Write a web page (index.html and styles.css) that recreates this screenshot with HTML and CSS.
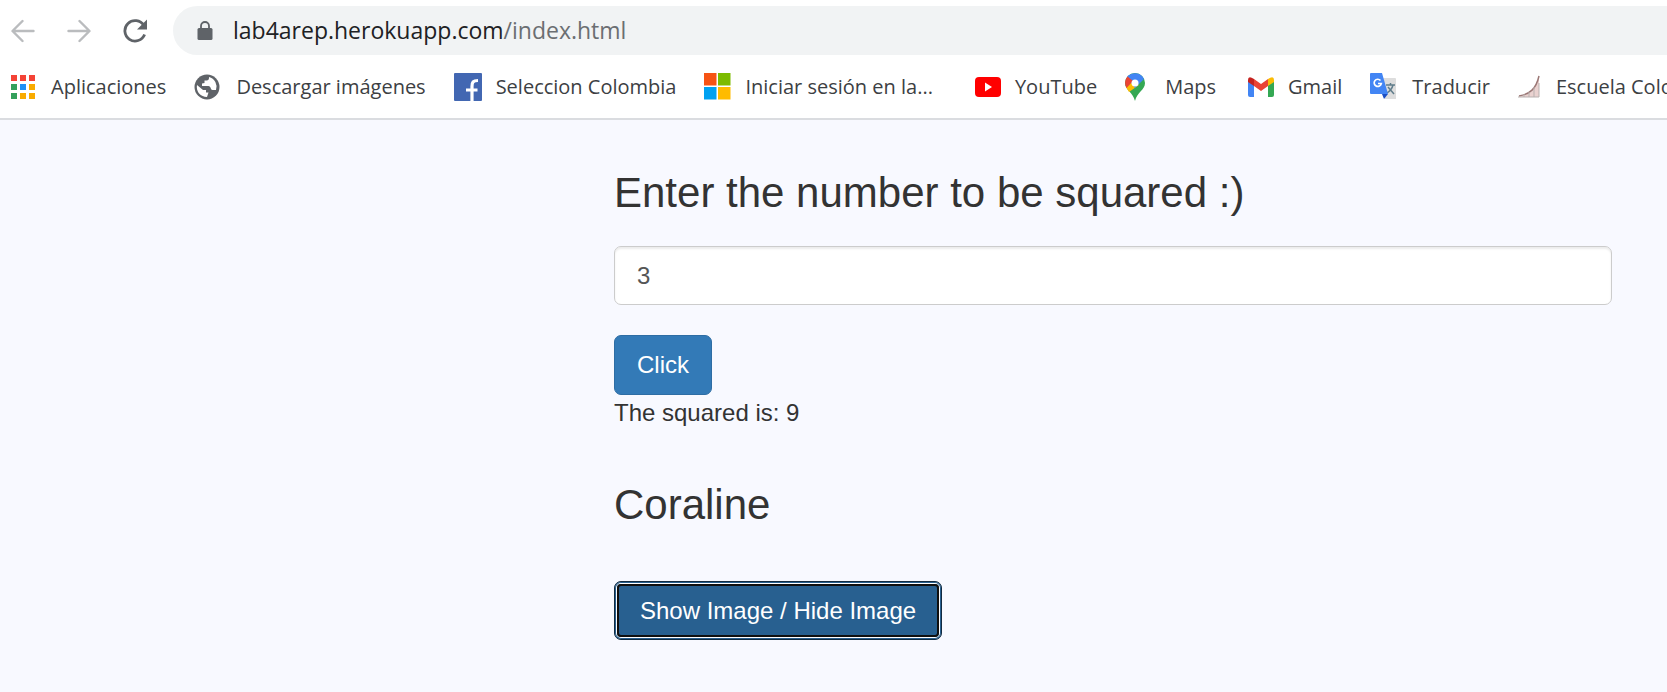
FILE: index.html
```html
<!DOCTYPE html>
<html lang="es">
<head>
<meta charset="utf-8">
<title>Square a number</title>
<link rel="stylesheet" href="styles.css">
</head>
<body>
<header class="browser">
  <div class="toolbar">
    <div class="navs">
      <button class="nav" type="button" aria-label="Back"><svg width="24" height="24" viewBox="0 0 24 24" fill="none" stroke="#babcbe" stroke-width="2.4" stroke-linecap="round" stroke-linejoin="round"><path d="M22.5 12H2M11.5 2L1.5 12l10 10"/></svg></button>
      <button class="nav" type="button" aria-label="Forward"><svg width="24" height="24" viewBox="0 0 24 24" fill="none" stroke="#babcbe" stroke-width="2.4" stroke-linecap="round" stroke-linejoin="round"><path d="M1.5 12H22M12.5 2l10 10-10 10"/></svg></button>
      <button class="nav" type="button" aria-label="Reload"><svg width="24" height="24" viewBox="0 0 24 24" fill="none"><path d="M20.8 6.5A10.2 10.2 0 1 0 21.6 15.5" stroke="#5f6368" stroke-width="2.8"/><path d="M24 .5V10.5H14z" fill="#5f6368"/></svg></button>
    </div>
    <div class="address">
      <svg width="16" height="20" viewBox="0 0 16 20"><path d="M4 8V5a4 4 0 0 1 8 0v3" fill="none" stroke="#5f6368" stroke-width="1.8"/><rect x="0.5" y="7" width="15" height="12" rx="1.5" fill="#5f6368"/></svg>
      <span class="url">lab4arep.herokuapp.com<span class="path">/index.html</span></span>
    </div>
  </div>
  <nav class="bookmarks">
    <a class="bookmark" href="#"><svg width="24" height="24" viewBox="0 0 24 24"><path fill="#f44336" d="M0 0h6v6H0zM9 0h6v6H9zM18 0h6v6h-6z"/><path fill="#34a05c" d="M0 9h6v6H0zM0 18h6v6H0z"/><path fill="#1e90f5" d="M9 9h6v6H9z"/><path fill="#f9ab00" d="M18 9h6v6h-6zM9 18h6v6H9zM18 18h6v6h-6z"/></svg>Aplicaciones</a>
    <a class="bookmark" href="#"><svg width="26" height="26" viewBox="0 0 26 26"><circle cx="13" cy="13" r="12.5" fill="#5f6368"/><path fill="#fff" d="M15 3c0 2 0 3-2 3.500h-2.500V9L8 9.500V12h6.500c2.500 0 2 4 4 4H22a10 10 0 0 0-7-13zM3 11l6 5h3v2.500h2.500L13 23A10 10 0 0 1 3 11z"/></svg>Descargar imágenes</a>
    <a class="bookmark snug" href="#"><svg width="28" height="28" viewBox="0 0 28 28"><rect width="28" height="28" rx="1" fill="#4267b2"/><path d="M18 28V13.5c0-4.500 1-6 6-6M12 17h11.500" fill="none" stroke="#fff" stroke-width="3.2"/></svg>Seleccion Colombia</a>
    <a class="bookmark snug" href="#"><svg width="27" height="27" viewBox="0 0 27 27"><path fill="#f65314" d="M0 0h12.5v12.5H0z"/><path fill="#7cbb00" d="M14 0h12.5v12.5H14z"/><path fill="#00a1f1" d="M0 14h12.5v12.5H0z"/><path fill="#ffbb00" d="M14 14h12.5v12.5H14z"/></svg>Iniciar sesión en la...</a>
    <a class="bookmark snug youtube" href="#"><svg width="26" height="20" viewBox="0 0 26 20"><rect width="26" height="20" rx="4" fill="#f00"/><path fill="#fff" d="M10 5.5l7 4.500-7 4.500z"/></svg>YouTube</a>
    <a class="bookmark wide" href="#"><svg width="20" height="28" viewBox="0 0 20 28"><path fill="#34a853" d="M10 0a10 10 0 0 1 10 10c0 7-8 9-10 18C8 19 0 17 0 10A10 10 0 0 1 10 0z"/><path fill="#fbbc04" d="M6 6L1 14l3 5L14 12z"/><path fill="#4285f4" d="M2 4a10 10 0 0 1 17 2l-9 9z"/><path fill="#ea4335" d="M2.500 3.500L8 8l-6.500 7C-.5 11-.5 7 2.500 3.500z"/><circle cx="10" cy="10" r="3.500" fill="#fff"/></svg>Maps</a>
    <a class="bookmark snug gmail" href="#"><svg width="26" height="20" viewBox="0 0 26 20"><path fill="#4285f4" d="M0 4l6 4v12H2q-2 0-2-2z"/><path fill="#34a853" d="M20 8l6-4v14q0 2-2 2h-4z"/><path fill="#ea4335" d="M6 2l7 5 7-5v7l-7 5-7-5z"/><path fill="#c5221f" d="M0 3q0-5 6-1v7L0 5z"/><path fill="#fbbc04" d="M26 3q0-5-6-1v7l6-4z"/></svg>Gmail</a>
    <a class="bookmark" href="#"><svg width="26" height="27" viewBox="0 0 26 27"><path fill="#ddd" d="M10 5h15q1 0 1 1v20H15z"/><path d="M16 12h9M20.500 10v2M23 12c-1 4-3 6-6 8M18 14l6 7" fill="none" stroke="#607d8b" stroke-width="1.500"/><path fill="#4285f4" d="M1 0h11l6 21H1q-1 0-1-1V1q0-1 1-1z"/><path fill="#1c4fc4" d="M12 21h6l-4 5z"/><path d="M10.500 7.500a3.600 3.600 0 1 0 .8 3H8" fill="none" stroke="#fff" stroke-width="1.700"/></svg>Traducir</a>
    <a class="bookmark" href="#"><svg width="22" height="23" viewBox="0 0 22 23"><path fill="#ead2d0" d="M0 22C12 20 19 14 21 0v22z"/><path d="M1 21C12 19 18 14 21 1" fill="none" stroke="#9b7775" stroke-width="1.500"/><path d="M0 22h21V8M6 22v-3M11 22v-5M16 22V12" fill="none" stroke="#b9b1b0"/></svg>Escuela Colo</a>
  </nav>
</header>
<main class="content">
  <h3 class="title"><label for="number">Enter the number to be squared :)</label></h3>
  <input class="field" id="number" type="text" value="3">
  <button class="button" type="button">Click</button>
  <p class="result">The squared is: 9</p>
  <h3 class="title">Coraline</h3>
  <button class="button focused" type="button">Show Image / Hide Image</button>
</main>
</body>
</html>
```
FILE: styles.css
```css
* { box-sizing: border-box; }
body {
  margin: 0;
  min-height: 100vh;
  overflow-x: hidden;
  background: #f8f9ff;
  color: #333;
  font: 24px/35px "Liberation Sans", Arial, sans-serif;
}
svg { flex: none; display: block; }
.browser {
  overflow: hidden;
  padding-top: 6px;
  background: #fff;
  border-bottom: 2px solid #dadce0;
  font-family: "Open Sans", "Noto Sans", sans-serif;
}
.toolbar { display: flex; align-items: center; gap: 26px; padding-left: 11px; }
.navs { display: flex; gap: 32px; }
.nav {
  flex: none;
  padding: 0;
  border: 0;
  background: none;
}
.address {
  display: flex;
  align-items: center;
  flex: 1;
  gap: 20px;
  height: 49px;
  padding-left: 24px;
  background: #f1f3f4;
  border-radius: 25px 0 0 25px;
}
.url { color: #202124; font-size: 23px; white-space: nowrap; }
.path { color: #6b6e72; }
.bookmarks {
  display: flex;
  align-items: center;
  gap: 28px;
  height: 63px;
  padding-left: 11px;
}
.bookmark {
  display: flex;
  flex: none;
  align-items: center;
  gap: 16px;
  color: #3c4043;
  font-size: 20px;
  text-decoration: none;
  white-space: nowrap;
}
.snug { gap: 14px; }
.wide { gap: 20px; }
.youtube { margin-left: 14px; }
.gmail { margin-left: 4px; }
.content { margin: 0 55px 0 614px; padding-top: 49px; }
.title { margin: 0; font-size: 42px; font-weight: 400; line-height: 48px; }
.field {
  display: block;
  width: 100%;
  height: 59px;
  margin: 29px 0 30px;
  padding: 0 22px;
  background: #fff;
  border: 1px solid #ccc;
  border-radius: 7px;
  box-shadow: inset 0 2px 2px rgba(0, 0, 0, .075);
  color: #555;
  font: inherit;
}
.button {
  display: block;
  height: 60px;
  padding: 0 22px 2px;
  background: #337ab7;
  border: 1px solid #2e6da4;
  border-radius: 7px;
  color: #fff;
  font: inherit;
}
.result { margin: 0 0 51px; }
.focused {
  height: 59px;
  margin-top: 52px;
  padding: 0 25px;
  background: #286090;
  border-color: #122b40;
  outline: 2px solid #101010;
  outline-offset: -5px;
  box-shadow: inset 0 0 0 1px #286090, inset 0 0 0 2px #fff;
}
```
